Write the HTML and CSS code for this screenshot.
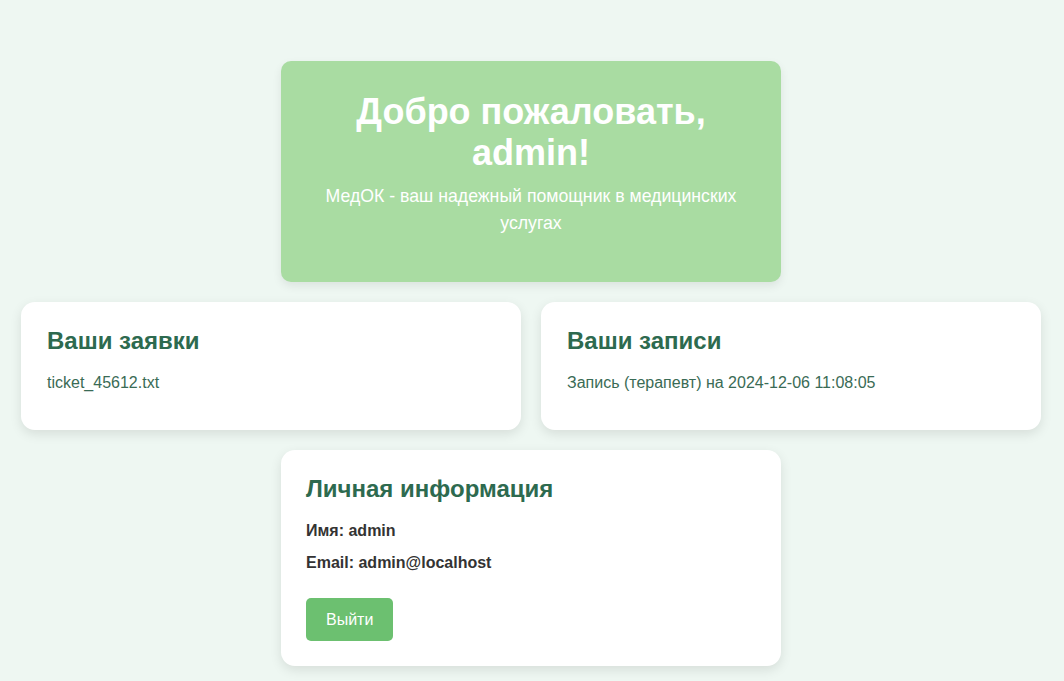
FILE: index.html
```html
<!DOCTYPE html>
<html lang="ru">
<head>
<meta charset="utf-8">
<title>МедОК</title>
<link rel="stylesheet" href="styles.css">
</head>
<body>
<main class="page">
  <section class="hero">
    <h1>Добро пожаловать, admin!</h1>
    <p>МедОК - ваш надежный помощник в медицинских услугах</p>
  </section>
  <div class="row">
    <section class="card">
      <h2>Ваши заявки</h2>
      <p>ticket_45612.txt</p>
    </section>
    <section class="card">
      <h2>Ваши записи</h2>
      <p>Запись (терапевт) на 2024-12-06 11:08:05</p>
    </section>
  </div>
  <section class="card info">
    <h2>Личная информация</h2>
    <p><strong>Имя:</strong> <strong>admin</strong></p>
    <p><strong>Email:</strong> <strong>admin@localhost</strong></p>
    <button class="btn" type="button">Выйти</button>
  </section>
</main>
</body>
</html>
```

FILE: styles.css
```css
* { box-sizing: border-box; }

html, body {
  margin: 0;
  padding: 0;
  background: #eef7f2;
  font-family: "Liberation Sans", Arial, sans-serif;
}

.page {
  display: flex;
  flex-direction: column;
  align-items: center;
  gap: 20px;
  padding: 61px 23px 20px 21px;
}

.row {
  display: flex;
  gap: 20px;
}

.hero {
  width: 500px;
  height: 221px;
  background: #a9dca2;
  border-radius: 10px;
  padding: 30px 32px 29px;
  text-align: center;
  color: #ffffff;
  box-shadow: 0 4px 10px rgba(0, 0, 0, 0.08);
}

.hero h1 {
  margin: 0 0 10px;
  font-size: 36px;
  font-weight: bold;
  line-height: 41px;
}

.hero p {
  margin: 0 0 16px;
  font-size: 17.7px;
  line-height: 27px;
}

.card {
  width: 500px;
  background: #ffffff;
  border-radius: 14px;
  padding: 25px 25px 25px 26px;
  box-shadow: 0 4px 12px rgba(0, 0, 0, 0.1);
}

.card h2 {
  margin: 0 0 16px;
  font-size: 24px;
  line-height: 28px;
  font-weight: bold;
  color: #2d6a4f;
}

.card p {
  margin: 0 0 10px;
  font-size: 16px;
  line-height: 24px;
  color: #3a6b55;
}

.info {
  padding-left: 25px;
}

.info p {
  margin: 0 0 8px;
  color: #333333;
}

.btn {
  margin-top: 23px;
  display: block;
  background: #6cc070;
  color: #ffffff;
  border: none;
  border-radius: 5px;
  padding: 12px 20px;
  font-family: "Liberation Sans", Arial, sans-serif;
  font-size: 16px;
  line-height: 19px;
  cursor: pointer;
}
```
